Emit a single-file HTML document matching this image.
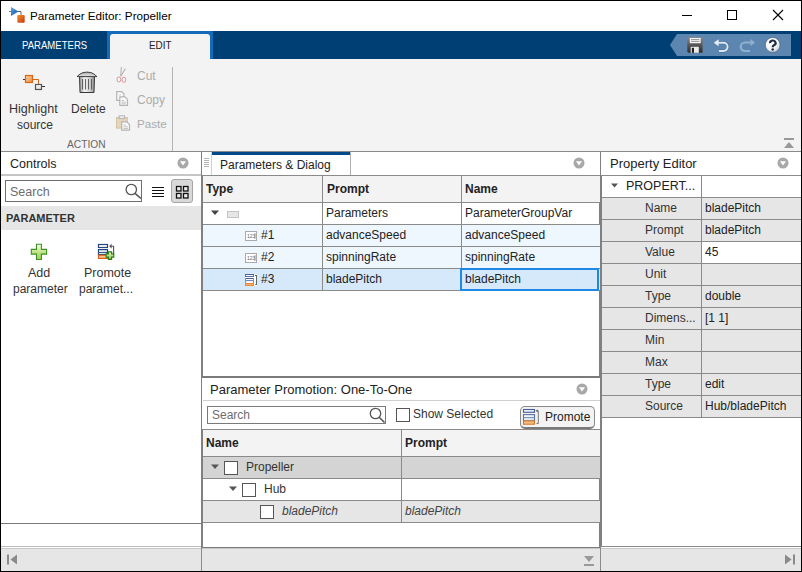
<!DOCTYPE html>
<html><head><meta charset="utf-8">
<style>
*{margin:0;padding:0;box-sizing:border-box}
html,body{width:802px;height:572px;overflow:hidden;background:#fff;font-family:"Liberation Sans",sans-serif;color:#000}
.a{position:absolute}
.t{position:absolute;white-space:nowrap;font-size:12px;line-height:14px}
.hl{position:absolute;height:1px;background:#a0a0a0}
.vl{position:absolute;width:1px;background:#a0a0a0}
</style></head><body>
<div class="a" style="left:0;top:0;width:802px;height:572px;border:1px solid #000;background:#fff"></div>

<!-- ============ TITLE BAR ============ -->
<svg class="a" style="left:8px;top:6px" width="20" height="18" viewBox="0 0 20 18">
  <line x1="1" y1="5.5" x2="4" y2="5.5" stroke="#777" stroke-width="1"/>
  <defs><linearGradient id="bg1" x1="0" y1="0" x2="1" y2="1"><stop offset="0" stop-color="#5aa8ec"/><stop offset="1" stop-color="#0b4f9c"/></linearGradient>
  <linearGradient id="rg1" x1="0" y1="0" x2="1" y2="1"><stop offset="0" stop-color="#f0922e"/><stop offset="1" stop-color="#c8380c"/></linearGradient></defs>
  <path d="M3 1 L10.5 5.5 L3 10 Z" fill="url(#bg1)"/>
  <path d="M10 5.5 H13 V9" fill="none" stroke="#666" stroke-width="1"/>
  <rect x="9.3" y="9" width="7.4" height="7.7" rx="1" fill="url(#rg1)"/>
</svg>
<div class="t" style="left:30px;top:9px;font-size:11.7px;color:#000">Parameter Editor: Propeller</div>
<div class="a" style="left:682px;top:15px;width:10px;height:1px;background:#000"></div>
<div class="a" style="left:727px;top:10px;width:10px;height:10px;border:1px solid #000"></div>
<svg class="a" style="left:772px;top:9px" width="12" height="12" viewBox="0 0 12 12"><path d="M1 1 L11 11 M11 1 L1 11" stroke="#000" stroke-width="1.1"/></svg>

<!-- ============ TAB BAR ============ -->
<div class="a" style="left:1px;top:31px;width:800px;height:28px;background:#003f73"></div>
<div class="t" style="left:22px;top:38px;color:#fff;font-size:11px;transform-origin:0 0;transform:scaleX(0.87)">PARAMETERS</div>
<div class="a" style="left:107px;top:31px;width:106px;height:28px;background:#136ab9"></div>
<div class="a" style="left:110px;top:34px;width:100px;height:25px;background:#f3f3f3;border-radius:3px 3px 0 0"></div>
<div class="t" style="left:149px;top:38px;color:#222;font-size:11px;transform-origin:0 0;transform:scaleX(0.9)">EDIT</div>
<!-- QAT -->
<svg class="a" style="left:669px;top:34px" width="123" height="23" viewBox="0 0 123 23"><path d="M8 0 H122 V22 H8 L1 11 Z" fill="#5c86af"/></svg>
<svg class="a" style="left:686px;top:37px" width="18" height="17" viewBox="0 0 18 17">
  <defs><linearGradient id="fg" x1="0" y1="0" x2="0" y2="1"><stop offset="0" stop-color="#8a8a8a"/><stop offset="0.5" stop-color="#555"/><stop offset="1" stop-color="#2e2e2e"/></linearGradient></defs>
  <path d="M1.3 0.3 H16.6 V15.8 H2.5 L1.3 14.6 Z" fill="url(#fg)"/>
  <rect x="3.8" y="1" width="10.9" height="5.2" fill="#f4f4f4"/>
  <path d="M5 2.6 H13.5 M5 4.4 H13.5" stroke="#888" stroke-width="0.9"/>
  <rect x="4.7" y="9.8" width="8.1" height="6" fill="#eaeaea"/>
  <rect x="5.8" y="10.8" width="2.2" height="5" fill="#222"/>
</svg>
<svg class="a" style="left:713px;top:39px" width="18" height="14" viewBox="0 0 18 14">
  <path d="M4 3.7 H10.5 A4.1 4.1 0 0 1 10.5 11.9 H6" fill="none" stroke="#2a4a6a" stroke-width="3" opacity="0.5"/>
  <path d="M4 3.7 H10.5 A4.1 4.1 0 0 1 10.5 11.9 H6" fill="none" stroke="#d8e8f6" stroke-width="2"/>
  <path d="M0.8 3.7 L5.6 0.2 V7.2 Z" fill="#e4eef8"/>
</svg>
<svg class="a" style="left:738px;top:39px" width="18" height="14" viewBox="0 0 18 14">
  <path d="M14 3.5 H7 A4.2 4.2 0 0 0 7 12 H12" fill="none" stroke="#8fb0cf" stroke-width="2.2"/>
  <path d="M17 3.5 L12.5 0 V7 Z" fill="#8fb0cf"/>
</svg>
<svg class="a" style="left:764px;top:37px" width="18" height="17" viewBox="0 0 18 17">
  <defs><radialGradient id="hg" cx="0.35" cy="0.3" r="0.8"><stop offset="0" stop-color="#fff"/><stop offset="0.6" stop-color="#f2f2f2"/><stop offset="1" stop-color="#c4ccd4"/></radialGradient></defs>
  <circle cx="8.7" cy="7.9" r="7.4" fill="url(#hg)" stroke="#3a5470" stroke-width="0.6"/>
  <path d="M6 6.1 A2.8 2.5 0 1 1 9.9 8.3 Q8.7 8.9 8.7 10.2" fill="none" stroke="#1c2c44" stroke-width="2.2"/>
  <circle cx="8.7" cy="12.6" r="1.25" fill="#1c2c44"/>
</svg>

<!-- ============ TOOLSTRIP ============ -->
<div class="a" style="left:1px;top:59px;width:800px;height:92px;background:#f3f3f3"></div>
<div class="a" style="left:1px;top:151px;width:800px;height:1px;background:#8a8a8a"></div>
<div class="a" style="left:172px;top:67px;width:1px;height:84px;background:#b4b4b4"></div>

<!-- Highlight source -->
<svg class="a" style="left:22px;top:73px" width="24" height="19" viewBox="0 0 24 19">
  <defs><linearGradient id="og" x1="0" y1="0" x2="1" y2="1"><stop offset="0" stop-color="#fbd3a0"/><stop offset="1" stop-color="#ee8a38"/></linearGradient>
  <linearGradient id="wg" x1="0" y1="0" x2="0" y2="1"><stop offset="0" stop-color="#fff"/><stop offset="1" stop-color="#d8d8d8"/></linearGradient></defs>
  <path d="M1 6.5 H3" stroke="#333" stroke-width="1"/>
  <rect x="3.5" y="2.5" width="7" height="7" fill="url(#og)" stroke="#d8661a" stroke-width="1.2"/>
  <path d="M10.5 6.5 H16.5 V11" fill="none" stroke="#d8661a" stroke-width="1"/>
  <rect x="13.5" y="11.5" width="6" height="5" fill="url(#wg)" stroke="#555" stroke-width="1.2"/>
  <path d="M20 13.5 H23" stroke="#333" stroke-width="1"/>
</svg>
<div class="t" style="left:9px;top:102px;font-size:12.5px;color:#333">Highlight</div>
<div class="t" style="left:17px;top:118px;font-size:12px;color:#333">source</div>
<!-- Delete -->
<svg class="a" style="left:76px;top:71px" width="22" height="23" viewBox="0 0 22 23">
  <defs><linearGradient id="tg" x1="0" x2="1"><stop offset="0" stop-color="#9a9a9a"/><stop offset="0.35" stop-color="#f4f4f4"/><stop offset="0.7" stop-color="#d0d0d0"/><stop offset="1" stop-color="#8a8a8a"/></linearGradient>
  <linearGradient id="lg" x1="0" y1="0" x2="0" y2="1"><stop offset="0" stop-color="#aaa"/><stop offset="1" stop-color="#e8e8e8"/></linearGradient></defs>
  <path d="M3.5 5.5 H18.5 L18 21.5 H4 Z" fill="url(#tg)" stroke="#3a3a3a" stroke-width="1"/>
  <path d="M1 5.6 Q4 2.6 7 1.6 Q11 0.6 15 1.6 Q18 2.6 21 5.6 Z" fill="url(#lg)" stroke="#444" stroke-width="1" stroke-linejoin="round"/>
  <path d="M6.5 8 V18.5 M9.5 8 V18.5 M12.5 8 V18.5 M15.5 8 V18.5" stroke="#555" stroke-width="0.9"/>
</svg>
<div class="t" style="left:71px;top:102px;font-size:12px;color:#333">Delete</div>
<!-- Cut/Copy/Paste -->
<svg class="a" style="left:115px;top:67px" width="14" height="17" viewBox="0 0 14 17">
  <path d="M6.4 0 L5.6 9.5 M10.4 1.6 L5.8 9.3" stroke="#b4b4b4" stroke-width="1.1"/>
  <ellipse cx="3.9" cy="12.5" rx="1.9" ry="2.6" fill="#f6fafa" stroke="#d99696" stroke-width="1"/>
  <ellipse cx="8.9" cy="12.8" rx="1.9" ry="2.6" fill="#f6fafa" stroke="#d99696" stroke-width="1"/>
</svg>
<div class="t" style="left:137px;top:69px;font-size:12px;color:#ababab">Cut</div>
<svg class="a" style="left:116px;top:90px" width="14" height="17" viewBox="0 0 14 17">
  <path d="M0.7 1.7 H5.7 L8 4 V10.3 H0.7 Z" fill="#fafafa" stroke="#b4b4b4" stroke-width="1.2"/>
  <path d="M2.5 5 H5" stroke="#c8c8c8" stroke-width="0.8"/>
  <path d="M3.8 6.9 H9 L11.5 9.4 V15.3 H3.8 Z" fill="#fafafa" stroke="#b4b4b4" stroke-width="1.2"/>
  <path d="M5.5 10.5 H8 M5.5 12.2 H10 M5.5 13.8 H10" stroke="#c0c0c0" stroke-width="0.9"/>
</svg>
<div class="t" style="left:137px;top:93px;font-size:12px;color:#ababab">Copy</div>
<svg class="a" style="left:115px;top:114px" width="17" height="18" viewBox="0 0 17 18">
  <rect x="1.5" y="3.5" width="10.8" height="10.6" fill="#e6d5bb" stroke="#d2c2a6" stroke-width="1"/>
  <rect x="4.2" y="1.8" width="5.4" height="2.8" fill="#eee" stroke="#b4b4b4" stroke-width="1"/>
  <path d="M6.7 7.8 H11.8 L14.5 10.5 V16.2 H6.7 Z" fill="#fafafa" stroke="#b4b4b4" stroke-width="1.2"/>
  <path d="M8.5 11 H11 M8.5 12.8 H13 M8.5 14.5 H13" stroke="#c0c0c0" stroke-width="0.9"/>
</svg>
<div class="t" style="left:137px;top:117px;font-size:11.6px;color:#ababab">Paste</div>
<div class="t" style="left:67px;top:137px;font-size:11px;color:#666;transform-origin:0 0;transform:scaleX(0.93)">ACTION</div>
<!-- collapse arrow -->
<svg class="a" style="left:784px;top:138px" width="11" height="11" viewBox="0 0 11 11"><rect x="0" y="0" width="10" height="2" fill="#999"/><path d="M0 10 L5 4 L10 10 Z" fill="#999"/></svg>


<!-- ============ CONTROLS PANEL ============ -->
<div class="t" style="left:10px;top:157px;font-size:12.5px;color:#222">Controls</div>
<svg class="a" style="left:177px;top:157px" width="12" height="12" viewBox="0 0 12 12"><circle cx="6" cy="6" r="5.5" fill="#a8a8a8"/><path d="M3 4.2 H9 L6 8.4 Z" fill="#fff"/></svg>
<div class="a" style="left:1px;top:174px;width:200px;height:2px;background:#c6c6c6"></div>
<div class="a" style="left:5px;top:180px;width:137px;height:22px;border:1px solid #6e6e6e;background:#fff"></div>
<div class="t" style="left:10px;top:185px;font-size:12.5px;color:#6d6d6d">Search</div>
<svg class="a" style="left:124px;top:182px" width="19" height="18" viewBox="0 0 19 18"><circle cx="7.3" cy="7.5" r="5.2" fill="none" stroke="#555" stroke-width="1.3"/><path d="M11 11.3 L17 16.5" stroke="#555" stroke-width="1.6"/></svg>
<svg class="a" style="left:151px;top:186px" width="14" height="12" viewBox="0 0 14 12"><path d="M1 1.5 H13 M1 4.5 H13 M1 7.5 H13 M1 10.5 H13" stroke="#111" stroke-width="1.1"/></svg>
<div class="a" style="left:171px;top:179px;width:22px;height:24px;background:#d9d9d9;border:1px solid #a5a5a5;border-radius:3px"></div>
<svg class="a" style="left:175px;top:185px" width="14" height="14" viewBox="0 0 14 14"><rect x="1.5" y="1.5" width="4.5" height="4.5" fill="#eee" stroke="#111" stroke-width="1.3"/><rect x="8.5" y="1.5" width="4.5" height="4.5" fill="#eee" stroke="#111" stroke-width="1.3"/><rect x="1.5" y="8.5" width="4.5" height="4.5" fill="#eee" stroke="#111" stroke-width="1.3"/><rect x="8.5" y="8.5" width="4.5" height="4.5" fill="#eee" stroke="#111" stroke-width="1.3"/></svg>
<div class="a" style="left:1px;top:206px;width:200px;height:24px;background:#e6e6e6"></div>
<div class="t" style="left:6px;top:211px;font-size:11px;font-weight:bold;color:#333">PARAMETER</div>
<svg class="a" style="left:29px;top:242px" width="20" height="20" viewBox="0 0 20 20">
  <defs><linearGradient id="pg" x1="0" y1="0" x2="0" y2="1"><stop offset="0" stop-color="#fbfff0"/><stop offset="0.35" stop-color="#d6f0a8"/><stop offset="0.5" stop-color="#bfe486"/><stop offset="1" stop-color="#9ad258"/></linearGradient></defs>
  <path d="M7.5 2.2 H12.4 V7.4 H17.6 V12.1 H12.4 V17.5 H7.5 V12.1 H2.3 V7.4 H7.5 Z" fill="url(#pg)" stroke="#3f8f25" stroke-width="1.1"/>
</svg>
<div class="t" style="left:28px;top:266px;font-size:12.5px;color:#333">Add</div>
<div class="t" style="left:13px;top:282px;font-size:12px;color:#333">parameter</div>
<svg class="a" style="left:96px;top:242px" width="20" height="19" viewBox="0 0 20 19">
  <defs><linearGradient id="pg2" x1="0" y1="0" x2="0" y2="1"><stop offset="0" stop-color="#e6f8c8"/><stop offset="1" stop-color="#7cc844"/></linearGradient>
  <linearGradient id="bl2" x1="0" y1="0" x2="1" y2="1"><stop offset="0" stop-color="#fff"/><stop offset="1" stop-color="#b8d8f0"/></linearGradient></defs>
  <rect x="2.5" y="2.5" width="9" height="3" fill="#fff" stroke="#24497a" stroke-width="1.2"/>
  <rect x="2.5" y="7.6" width="9" height="5" fill="url(#bl2)" stroke="#24497a" stroke-width="1.2"/>
  <path d="M2.5 10.5 H11.5" stroke="#3a5a8a" stroke-width="1"/>
  <rect x="2.5" y="13.2" width="9" height="3.2" fill="#f6c690" stroke="#d2621c" stroke-width="1.2"/>
  <path d="M17.6 12 V4.2 H15" fill="none" stroke="#555" stroke-width="1.1"/>
  <path d="M13.2 4.2 L15.6 1.8 V6.6 Z" fill="#555"/>
  <path d="M12.4 9.9 H15.6 V11.9 H17.8 V15.1 H15.6 V17.4 H12.4 V15.1 H10.1 V11.9 H12.4 Z" fill="url(#pg2)" stroke="#2e7a1a" stroke-width="1.1"/>
</svg>
<div class="t" style="left:84px;top:266px;font-size:12.5px;color:#333">Promote</div>
<div class="t" style="left:79px;top:282px;font-size:12px;color:#333">paramet...</div>
<div class="a" style="left:1px;top:523px;width:200px;height:1px;background:#7a7a7a"></div>
<div class="a" style="left:1px;top:546px;width:200px;height:1px;background:#bdbdbd"></div>

<!-- dividers -->
<div class="a" style="left:201px;top:152px;width:1px;height:397px;background:#808080"></div>
<div class="a" style="left:202px;top:175px;width:1px;height:203px;background:#808080"></div>
<div class="a" style="left:202px;top:429px;width:1px;height:120px;background:#808080"></div>
<div class="a" style="left:600px;top:152px;width:1px;height:397px;background:#808080"></div>
<div class="a" style="left:599px;top:175px;width:1px;height:203px;background:#808080"></div>
<div class="a" style="left:599px;top:429px;width:1px;height:120px;background:#808080"></div>
<div class="a" style="left:601px;top:175px;width:1px;height:372px;background:#808080"></div>

<!-- ============ PARAMETERS & DIALOG ============ -->
<div class="a" style="left:211px;top:152px;width:1px;height:23px;background:#cfcfcf"></div>
<svg class="a" style="left:204px;top:157px" width="6" height="11" viewBox="0 0 6 11"><path d="M0 1.5 H5 M0 3.5 H5 M0 5.5 H5 M0 7.5 H5 M0 9.5 H5" stroke="#a0a0a0" stroke-width="0.8"/></svg>
<div class="a" style="left:212px;top:152px;width:138px;height:3px;background:#004a8c"></div>
<div class="a" style="left:350px;top:152px;width:1px;height:23px;background:#b0b0b0"></div>
<div class="t" style="left:220px;top:158px;font-size:12px;color:#222">Parameters &amp; Dialog</div>
<svg class="a" style="left:573px;top:157px" width="12" height="12" viewBox="0 0 12 12"><circle cx="6" cy="6" r="5.5" fill="#a8a8a8"/><path d="M3 4.2 H9 L6 8.4 Z" fill="#fff"/></svg>
<div class="a" style="left:202px;top:175px;width:398px;height:1px;background:#8a8a8a"></div>
<!-- table header -->
<div class="a" style="left:203px;top:176px;width:397px;height:26px;background:#f3f3f3"></div>
<div class="t" style="left:206px;top:182px;font-weight:bold;color:#222">Type</div>
<div class="t" style="left:327px;top:182px;font-weight:bold;color:#222">Prompt</div>
<div class="t" style="left:465px;top:182px;font-weight:bold;color:#222">Name</div>
<!-- rows -->
<div class="a" style="left:203px;top:225px;width:397px;height:21px;background:#eef6fe"></div>
<div class="a" style="left:203px;top:247px;width:397px;height:21px;background:#eef6fe"></div>
<div class="a" style="left:203px;top:269px;width:397px;height:21px;background:#d6e9fb"></div>
<div class="hl" style="left:203px;top:202px;width:397px;background:#8a8a8a"></div>
<div class="hl" style="left:203px;top:224px;width:397px;background:#8a8a8a"></div>
<div class="hl" style="left:203px;top:246px;width:397px;background:#8a8a8a"></div>
<div class="hl" style="left:203px;top:268px;width:397px;background:#8a8a8a"></div>
<div class="hl" style="left:203px;top:290px;width:397px;background:#8a8a8a"></div>
<div class="vl" style="left:322px;top:176px;height:114px;background:#8a8a8a"></div>
<div class="vl" style="left:461px;top:176px;height:114px;background:#8a8a8a"></div>
<div class="a" style="left:460px;top:268px;width:139px;height:23px;border:2px solid #1e88e5"></div>
<svg class="a" style="left:210px;top:210px" width="10" height="6" viewBox="0 0 10 6"><path d="M1 0.5 H9 L5 5 Z" fill="#444"/></svg>
<div class="a" style="left:227px;top:211px;width:12px;height:7px;background:#e6e6e6;border:1px solid #c4c4c4"></div>
<div class="t" style="left:326px;top:206px;color:#222">Parameters</div>
<div class="t" style="left:465px;top:206px;color:#222">ParameterGroupVar</div>
<svg class="a" style="left:245px;top:231px" width="13" height="11" viewBox="0 0 13 11"><rect x="0.5" y="0.5" width="11" height="9" fill="#fff" stroke="#aaa"/><text x="2" y="7" font-size="5" font-family="Liberation Sans" fill="#666">123</text><path d="M10 2 V8" stroke="#666" stroke-width="0.6"/></svg>
<div class="t" style="left:261px;top:228px;color:#222">#1</div>
<div class="t" style="left:326px;top:228px;color:#222">advanceSpeed</div>
<div class="t" style="left:465px;top:228px;color:#222">advanceSpeed</div>
<svg class="a" style="left:245px;top:253px" width="13" height="11" viewBox="0 0 13 11"><rect x="0.5" y="0.5" width="11" height="9" fill="#fff" stroke="#aaa"/><text x="2" y="7" font-size="5" font-family="Liberation Sans" fill="#666">123</text><path d="M10 2 V8" stroke="#666" stroke-width="0.6"/></svg>
<div class="t" style="left:261px;top:250px;color:#222">#2</div>
<div class="t" style="left:326px;top:250px;color:#222">spinningRate</div>
<div class="t" style="left:465px;top:250px;color:#222">spinningRate</div>
<svg class="a" style="left:245px;top:274px" width="13" height="13" viewBox="0 0 13 13" shape-rendering="crispEdges">
  <rect x="0" y="0" width="12" height="12" fill="#fff"/>
  <rect x="0" y="0" width="9" height="1" fill="#4a5f95"/><rect x="0" y="2" width="9" height="1" fill="#5a6e9e"/>
  <rect x="0" y="4" width="9" height="1" fill="#4a5f95"/><rect x="0" y="6" width="9" height="1" fill="#7788b0"/>
  <rect x="0" y="0" width="1" height="3" fill="#5a6e9e"/><rect x="8" y="0" width="1" height="3" fill="#5a6e9e"/><rect x="0" y="4" width="1" height="5" fill="#7f90b5"/><rect x="8" y="4" width="1" height="5" fill="#7f90b5"/>
  <rect x="1" y="7" width="7" height="2" fill="#f4f6fa"/>
  <rect x="0" y="9" width="9" height="3" fill="#e88a3a"/><rect x="1" y="10" width="7" height="1" fill="#f2b070"/>
  <rect x="11" y="1" width="1" height="10" fill="#666"/><rect x="10" y="10" width="1" height="1" fill="#888"/><rect x="10" y="1" width="1" height="1" fill="#555"/>
</svg>
<div class="t" style="left:261px;top:272px;color:#222">#3</div>
<div class="t" style="left:326px;top:272px;color:#222">bladePitch</div>
<div class="t" style="left:465px;top:272px;color:#222">bladePitch</div>
<div class="a" style="left:202px;top:376px;width:398px;height:2px;background:#7a7a7a"></div>

<!-- ============ PARAMETER PROMOTION ============ -->
<div class="t" style="left:210px;top:383px;font-size:13px;color:#222">Parameter Promotion: One-To-One</div>
<svg class="a" style="left:576px;top:383px" width="12" height="12" viewBox="0 0 12 12"><circle cx="6" cy="6" r="5.5" fill="#a8a8a8"/><path d="M3 4.2 H9 L6 8.4 Z" fill="#fff"/></svg>
<div class="hl" style="left:203px;top:400px;width:397px;background:#cfcfcf"></div>
<div class="a" style="left:207px;top:406px;width:179px;height:18px;border:1px solid #7a7a7a;background:#fff"></div>
<div class="t" style="left:212px;top:408px;color:#6d6d6d">Search</div>
<svg class="a" style="left:368px;top:406px" width="18" height="18" viewBox="0 0 18 18"><circle cx="7.5" cy="7.5" r="5.2" fill="none" stroke="#555" stroke-width="1.3"/><path d="M11.2 11.3 L16.5 16.5" stroke="#555" stroke-width="1.6"/></svg>
<div class="a" style="left:396px;top:408px;width:14px;height:14px;border:1px solid #555;background:#fff"></div>
<div class="t" style="left:413px;top:407px;color:#333">Show Selected</div>
<div class="a" style="left:520px;top:406px;width:75px;height:23px;border:1px solid #8a8a8a;border-bottom:2px solid #7a7a7a;border-radius:5px;background:#f3f3f3"></div>
<svg class="a" style="left:522px;top:408px" width="18" height="18" viewBox="0 0 18 18">
  <defs><linearGradient id="bl3" x1="0" y1="0" x2="1" y2="1"><stop offset="0" stop-color="#fff"/><stop offset="1" stop-color="#cfe4f4"/></linearGradient></defs>
  <rect x="1.5" y="1.5" width="11" height="2.8" fill="url(#bl3)" stroke="#4a5f95" stroke-width="1.1"/>
  <rect x="1.5" y="6.6" width="11" height="6.2" fill="url(#bl3)" stroke="#5a6e9e" stroke-width="1.1"/>
  <path d="M1.5 9.6 H12.5" stroke="#8090b0" stroke-width="1.1"/>
  <rect x="1.5" y="12.9" width="11" height="3.3" fill="#f4c088" stroke="#d8782a" stroke-width="1.1"/>
  <path d="M14.5 15.5 H16.3 V2.8 H15" fill="none" stroke="#777" stroke-width="1"/>
  <path d="M13.6 2.8 L15.6 1.2 V4.4 Z" fill="#666"/>
</svg>
<div class="t" style="left:545px;top:410px;color:#222">Promote</div>
<div class="hl" style="left:203px;top:429px;width:397px;background:#8a8a8a"></div>
<div class="a" style="left:203px;top:430px;width:397px;height:26px;background:#f3f3f3"></div>
<div class="t" style="left:206px;top:436px;font-weight:bold;color:#222">Name</div>
<div class="t" style="left:405px;top:436px;font-weight:bold;color:#222">Prompt</div>
<div class="hl" style="left:203px;top:456px;width:397px;background:#8a8a8a"></div>
<div class="a" style="left:203px;top:457px;width:397px;height:21px;background:#d4d4d4"></div>
<div class="hl" style="left:203px;top:478px;width:397px;background:#8a8a8a"></div>
<div class="hl" style="left:203px;top:500px;width:397px;background:#8a8a8a"></div>
<div class="a" style="left:203px;top:501px;width:397px;height:21px;background:#e6e6e6"></div>
<div class="hl" style="left:203px;top:522px;width:397px;background:#8a8a8a"></div>
<div class="vl" style="left:401px;top:430px;height:92px;background:#8a8a8a"></div>
<svg class="a" style="left:210px;top:464px" width="10" height="6" viewBox="0 0 10 6"><path d="M1 0.5 H9 L5 5 Z" fill="#555"/></svg>
<div class="a" style="left:224px;top:461px;width:14px;height:14px;border:1px solid #555;background:#fff"></div>
<div class="t" style="left:246px;top:460px;color:#333">Propeller</div>
<svg class="a" style="left:228px;top:486px" width="10" height="6" viewBox="0 0 10 6"><path d="M1 0.5 H9 L5 5 Z" fill="#555"/></svg>
<div class="a" style="left:242px;top:483px;width:14px;height:14px;border:1px solid #555;background:#fff"></div>
<div class="t" style="left:264px;top:482px;color:#333">Hub</div>
<div class="a" style="left:260px;top:505px;width:14px;height:14px;border:1px solid #555;background:#fff"></div>
<div class="t" style="left:282px;top:504px;font-style:italic;color:#444">bladePitch</div>
<div class="t" style="left:405px;top:504px;font-style:italic;color:#444">bladePitch</div>
<div class="a" style="left:203px;top:547px;width:397px;height:2px;background:#7a7a7a"></div>

<!-- ============ PROPERTY EDITOR ============ -->
<div class="t" style="left:610px;top:157px;font-size:13px;color:#222">Property Editor</div>
<svg class="a" style="left:777px;top:157px" width="12" height="12" viewBox="0 0 12 12"><circle cx="6" cy="6" r="5.5" fill="#a8a8a8"/><path d="M3 4.2 H9 L6 8.4 Z" fill="#fff"/></svg>
<div class="a" style="left:601px;top:175px;width:200px;height:1px;background:#8a8a8a"></div>
<svg class="a" style="left:610px;top:183px" width="10" height="6" viewBox="0 0 10 6"><path d="M1 0.5 H8 L4.5 4.5 Z" fill="#555"/></svg>
<div class="t" style="left:626px;top:179px;font-size:12.5px;color:#222">PROPERT...</div>
<div class="a" style="left:602px;top:198px;width:199px;height:219px;background:#e6e6e6"></div>
<div class="a" style="left:702px;top:242px;width:99px;height:21px;background:#fff"></div>
<div class="hl" style="left:602px;top:197px;width:199px;background:#8a8a8a"></div>
<div class="t" style="left:645px;top:201px;color:#333">Name</div>
<div class="t" style="left:705px;top:201px;color:#222">bladePitch</div>
<div class="hl" style="left:602px;top:219px;width:199px;background:#8a8a8a"></div>
<div class="t" style="left:645px;top:223px;color:#333">Prompt</div>
<div class="t" style="left:705px;top:223px;color:#222">bladePitch</div>
<div class="hl" style="left:602px;top:241px;width:199px;background:#8a8a8a"></div>
<div class="t" style="left:645px;top:245px;color:#333">Value</div>
<div class="t" style="left:705px;top:245px;color:#222">45</div>
<div class="hl" style="left:602px;top:263px;width:199px;background:#8a8a8a"></div>
<div class="t" style="left:645px;top:267px;color:#333">Unit</div>
<div class="hl" style="left:602px;top:285px;width:199px;background:#8a8a8a"></div>
<div class="t" style="left:645px;top:289px;color:#333">Type</div>
<div class="t" style="left:705px;top:289px;color:#222">double</div>
<div class="hl" style="left:602px;top:307px;width:199px;background:#8a8a8a"></div>
<div class="t" style="left:645px;top:311px;color:#333">Dimens...</div>
<div class="t" style="left:705px;top:311px;color:#222">[1 1]</div>
<div class="hl" style="left:602px;top:329px;width:199px;background:#8a8a8a"></div>
<div class="t" style="left:645px;top:333px;color:#333">Min</div>
<div class="hl" style="left:602px;top:351px;width:199px;background:#8a8a8a"></div>
<div class="t" style="left:645px;top:355px;color:#333">Max</div>
<div class="hl" style="left:602px;top:373px;width:199px;background:#8a8a8a"></div>
<div class="t" style="left:645px;top:377px;color:#333">Type</div>
<div class="t" style="left:705px;top:377px;color:#222">edit</div>
<div class="hl" style="left:602px;top:395px;width:199px;background:#8a8a8a"></div>
<div class="t" style="left:645px;top:399px;color:#333">Source</div>
<div class="t" style="left:705px;top:399px;color:#222">Hub/bladePitch</div>
<div class="hl" style="left:602px;top:417px;width:199px;background:#8a8a8a"></div>

<div class="vl" style="left:701px;top:176px;height:241px;background:#8a8a8a"></div>
<div class="a" style="left:601px;top:546px;width:200px;height:1px;background:#8a8a8a"></div>

<!-- ============ BOTTOM STRIP ============ -->
<div class="a" style="left:1px;top:549px;width:800px;height:22px;background:#e6e6e6"></div>
<div class="a" style="left:1px;top:548px;width:800px;height:1px;background:#c8c8c8"></div>
<div class="a" style="left:201px;top:548px;width:1px;height:23px;background:#8a8a8a"></div>
<div class="a" style="left:600px;top:548px;width:1px;height:23px;background:#8a8a8a"></div>
<svg class="a" style="left:6px;top:554px" width="12" height="11" viewBox="0 0 12 11"><rect x="1" y="0.5" width="2" height="10" fill="#8a8a8a"/><path d="M11 0.5 V10.5 L4.5 5.5 Z" fill="#8a8a8a"/></svg>
<svg class="a" style="left:584px;top:556px" width="11" height="11" viewBox="0 0 11 11"><path d="M0 0 L5 6 L10 0 Z" fill="#999"/><rect x="0" y="8" width="10" height="2" fill="#999"/></svg>
<svg class="a" style="left:784px;top:554px" width="12" height="11" viewBox="0 0 12 11"><path d="M1 0.5 V10.5 L7.5 5.5 Z" fill="#8a8a8a"/><rect x="9" y="0.5" width="2" height="10" fill="#8a8a8a"/></svg>

</body></html>
